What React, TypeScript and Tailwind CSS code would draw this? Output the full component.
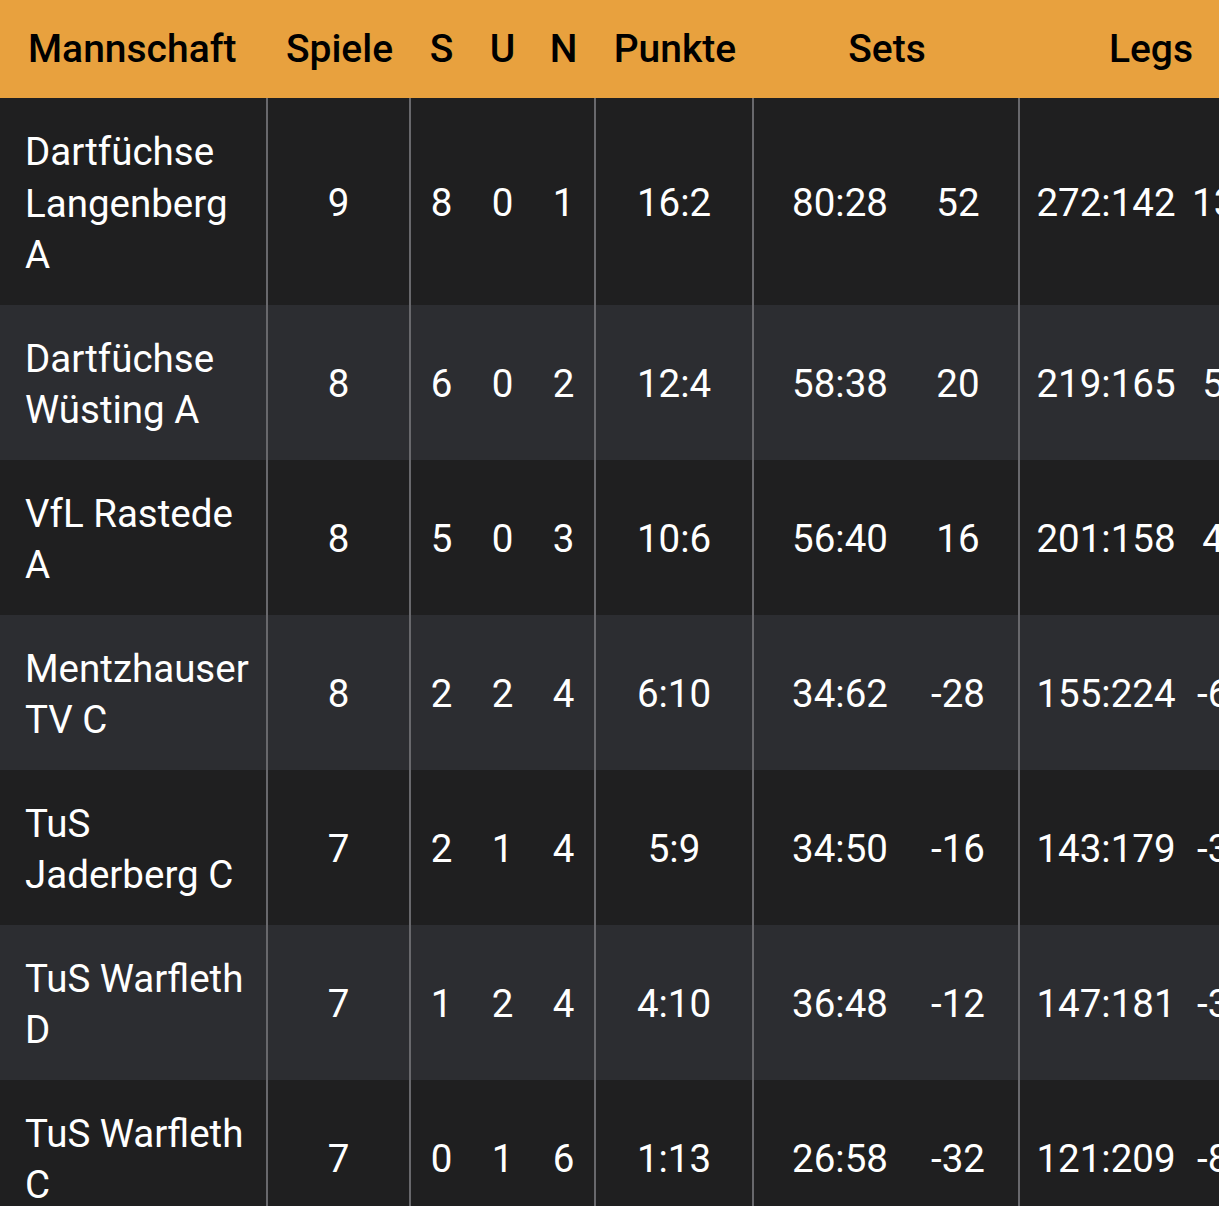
import React from 'react';

interface Team {
    name: string;
    games: number;
    won: number;
    draw: number;
    lost: number;
    points: string;
    sets: string;
    setDiff: number;
    legs: string;
    legDiff: number;
}

const teams: Team[] = [
    { name: 'Dartfüchse Langenberg A', games: 9, won: 8, draw: 0, lost: 1, points: '16:2', sets: '80:28', setDiff: 52, legs: '272:142', legDiff: 130 },
    { name: 'Dartfüchse Wüsting A', games: 8, won: 6, draw: 0, lost: 2, points: '12:4', sets: '58:38', setDiff: 20, legs: '219:165', legDiff: 54 },
    { name: 'VfL Rastede A', games: 8, won: 5, draw: 0, lost: 3, points: '10:6', sets: '56:40', setDiff: 16, legs: '201:158', legDiff: 43 },
    { name: 'Mentzhauser TV C', games: 8, won: 2, draw: 2, lost: 4, points: '6:10', sets: '34:62', setDiff: -28, legs: '155:224', legDiff: -69 },
    { name: 'TuS Jaderberg C', games: 7, won: 2, draw: 1, lost: 4, points: '5:9', sets: '34:50', setDiff: -16, legs: '143:179', legDiff: -36 },
    { name: 'TuS Warfleth D', games: 7, won: 1, draw: 2, lost: 4, points: '4:10', sets: '36:48', setDiff: -12, legs: '147:181', legDiff: -34 },
    { name: 'TuS Warfleth C', games: 7, won: 0, draw: 1, lost: 6, points: '1:13', sets: '26:58', setDiff: -32, legs: '121:209', legDiff: -88 },
];

const sep = 'border-r-2 border-[#68686c]';

function HeaderRow() {
    return (
        <div className="flex h-[98px] items-center bg-[#e8a13e] text-black font-medium text-[39px]">
            <div className="w-[268px] shrink-0 pl-[28px]">Mannschaft</div>
            <div className="w-[143px] shrink-0 text-center">Spiele</div>
            <div className="w-[185px] shrink-0 flex">
                <span className="w-[61px] text-center">S</span>
                <span className="w-[61px] text-center">U</span>
                <span className="w-[61px] text-center">N</span>
            </div>
            <div className="w-[158px] shrink-0 text-center">Punkte</div>
            <div className="w-[266px] shrink-0 text-center">Sets</div>
            <div className="w-[262px] shrink-0 text-center">Legs</div>
        </div>
    );
}

function TeamRow({ team, odd }: { team: Team; odd: boolean }) {
    return (
        <div className={`flex items-stretch text-white text-[38.5px] leading-[51.5px] ${odd ? 'bg-[#2c2d31]' : 'bg-[#1f1f20]'}`}>
            <div className={`w-[268px] shrink-0 pt-[28px] pb-[24px] pl-[25px] pr-[12px] flex items-center ${sep}`}>
                <span>{team.name}</span>
            </div>
            <div className={`w-[143px] shrink-0 pt-[3px] flex items-center justify-center ${sep}`}>{team.games}</div>
            <div className={`w-[185px] shrink-0 pt-[3px] flex items-center ${sep}`}>
                <span className="w-[61px] text-center">{team.won}</span>
                <span className="w-[61px] text-center">{team.draw}</span>
                <span className="w-[61px] text-center">{team.lost}</span>
            </div>
            <div className={`w-[158px] shrink-0 pt-[3px] flex items-center justify-center ${sep}`}>{team.points}</div>
            <div className={`w-[266px] shrink-0 pt-[3px] flex items-center ${sep}`}>
                <span className="w-[172px] text-center">{team.sets}</span>
                <span className="w-[64px] text-center">{team.setDiff}</span>
            </div>
            <div className="w-[262px] shrink-0 pt-[3px] flex items-center whitespace-nowrap">
                <span className="w-[172px] shrink-0 text-center">{team.legs}</span>
                <span className="w-[64px] shrink-0 text-center">{team.legDiff}</span>
            </div>
        </div>
    );
}

export default function App() {
    return (
        <div className="w-[1219px] h-[1206px] overflow-hidden bg-[#1f1f20] font-['Roboto',sans-serif]">
            <div className="w-[1300px]">
                <HeaderRow />
                {teams.map((team, i) => (
                    <TeamRow key={team.name} team={team} odd={i % 2 === 1} />
                ))}
            </div>
        </div>
    );
}
